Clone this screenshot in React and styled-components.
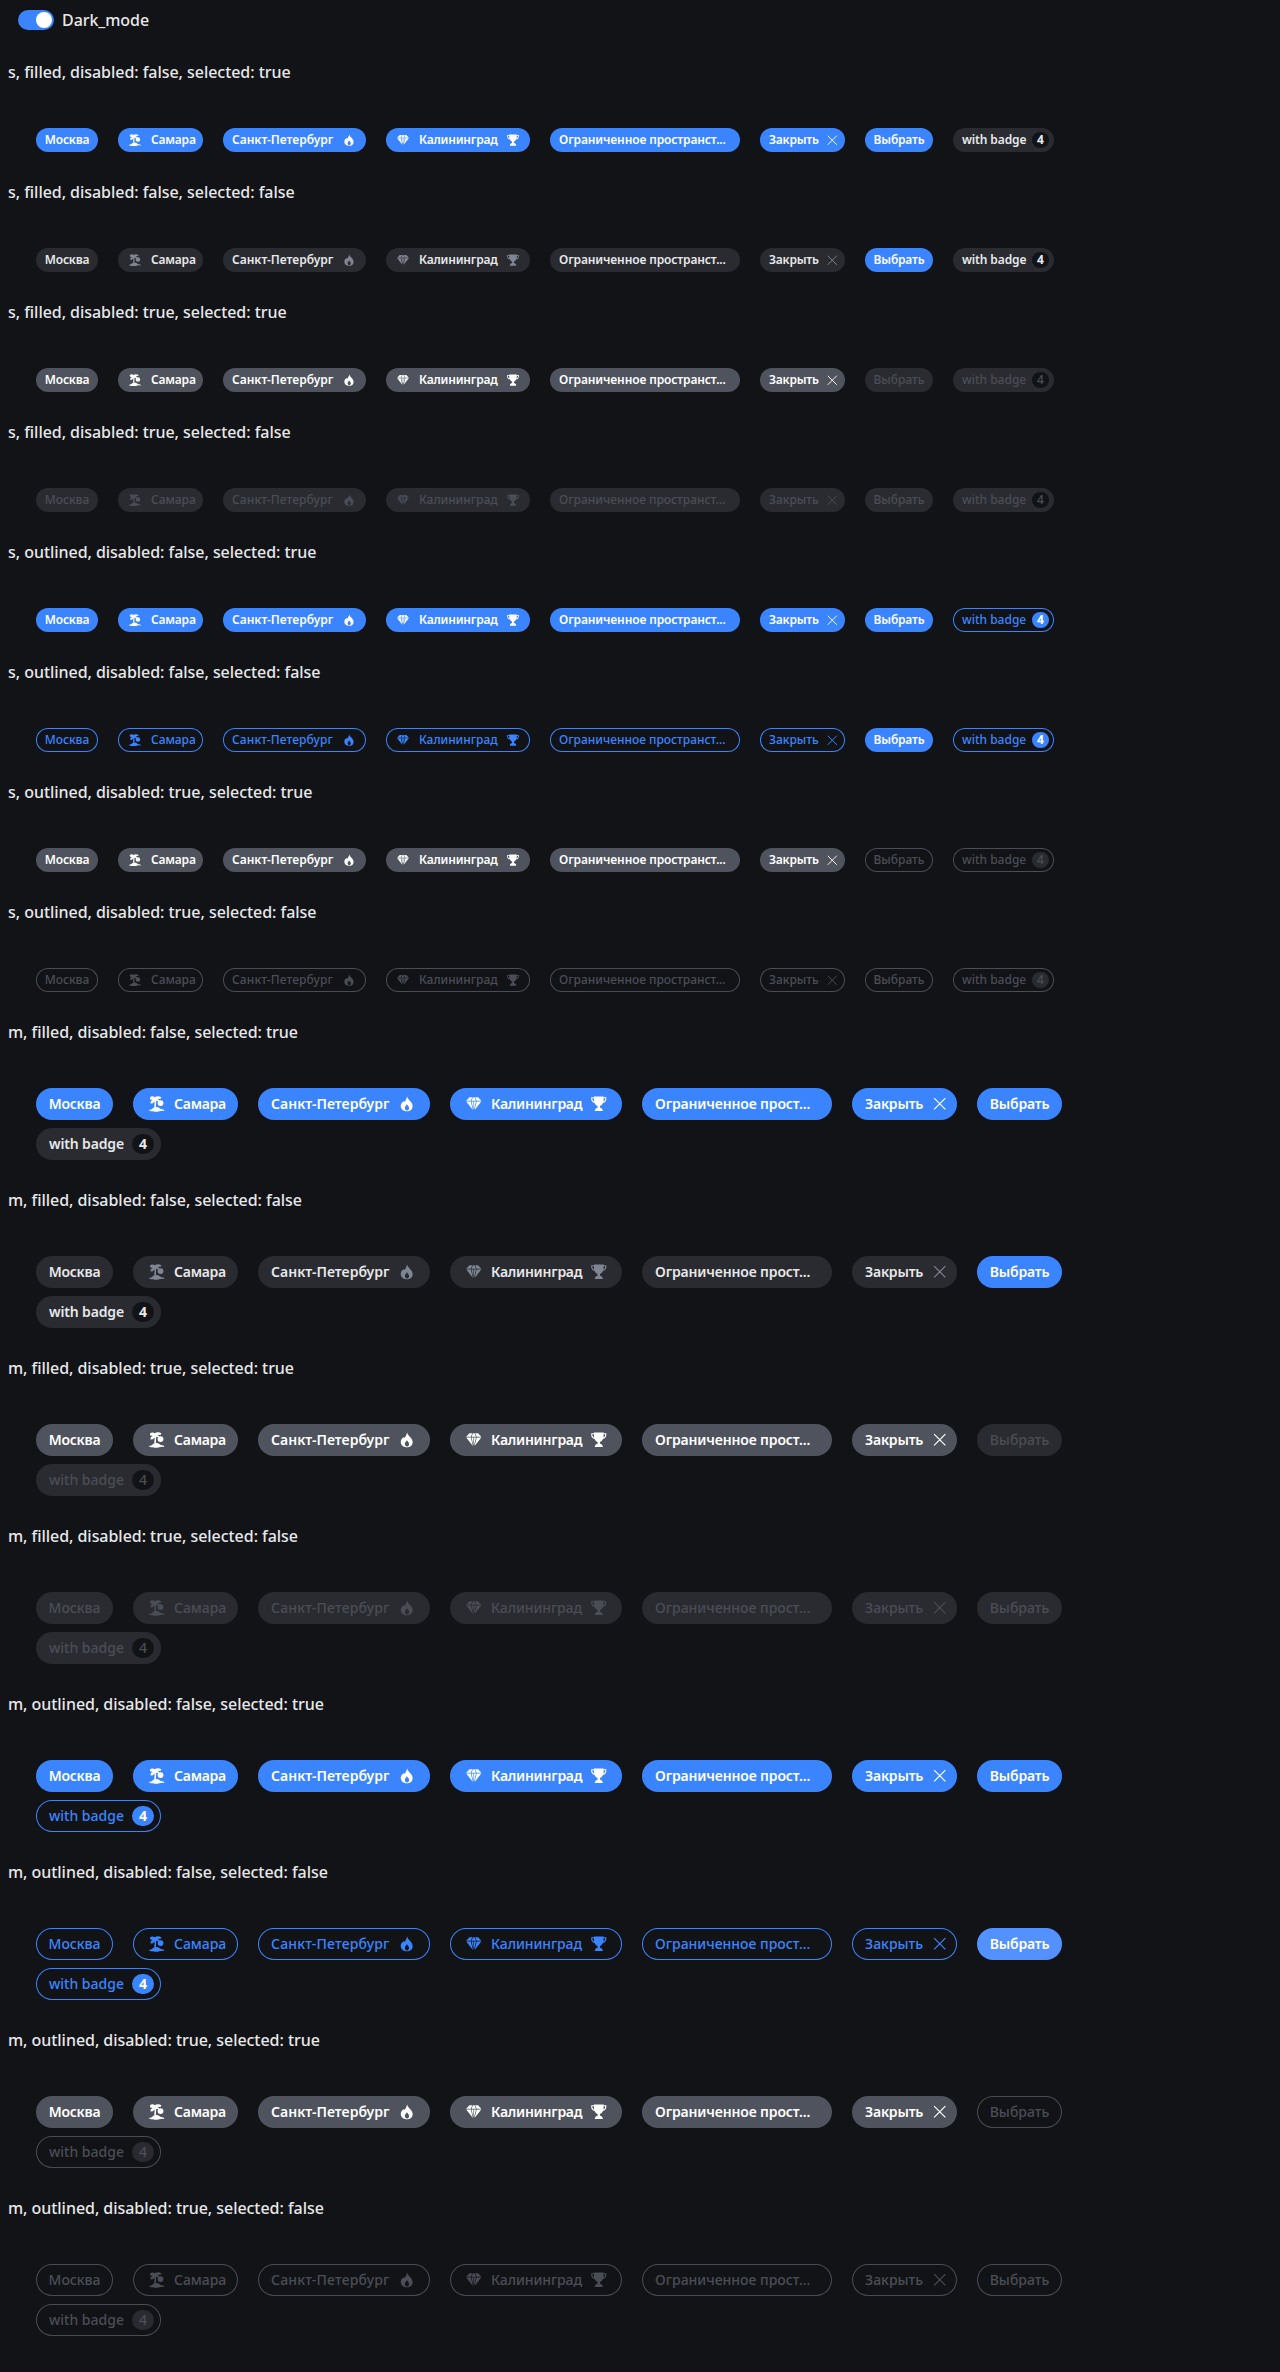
import React, { useState } from 'react';
import styled, { createGlobalStyle, css } from 'styled-components';

const color = {
  page: '#121317',
  text: '#e7e8ea',
  accent: '#3a85ff',
  accentHover: '#5291ff',
  surface: '#2a2b30',
  muted: '#4f535d',
  icon: '#7f8592',
  faint: '#4a4d56',
};

const GlobalStyle = createGlobalStyle`
  body {
    margin: 0;
    background: ${color.page};
    color: ${color.text};
    font-family: "Noto Sans", "Open Sans", sans-serif;
    font-weight: 500;
  }
`;

const Page = styled.main`
  box-sizing: border-box;
  min-height: 2372px;
  padding: 10px 8px 0;
`;

const ModeSwitch = styled.label`
  display: flex;
  align-items: center;
  gap: 8px;
  height: 20px;
  margin-bottom: 30px;
  padding-left: 10px;
  font-size: 16px;
  line-height: 20px;
  letter-spacing: -0.05px;
  cursor: pointer;
`;

const Track = styled.span`
  box-sizing: border-box;
  display: flex;
  justify-content: ${(p) => (p.$on ? 'flex-end' : 'flex-start')};
  width: 36px;
  height: 20px;
  padding: 2px;
  border-radius: 10px;
  background: ${(p) => (p.$on ? color.accent : color.muted)};
`;

const Knob = styled.span`
  width: 16px;
  height: 16px;
  border-radius: 50%;
  background: #fff;
`;

const HiddenInput = styled.input`
  position: absolute;
  opacity: 0;
  width: 0;
  height: 0;
  margin: 0;
`;

const Section = styled.section`
  display: flex;
  flex-direction: column;
  gap: 44px;
  padding-bottom: 28px;
`;

const Title = styled.h2`
  margin: 0;
  font-size: 16px;
  font-weight: 500;
  line-height: 24px;
  letter-spacing: -0.045px;
`;

const ChipRow = styled.div`
  display: flex;
  flex-wrap: wrap;
  gap: 8px 20px;
  width: 1100px;
  padding-left: 28px;
`;

const filledIdle = css`
  background: ${color.surface};
  color: ${color.text};
`;
const outlinedIdle = css`
  box-shadow: inset 0 0 0 1px ${color.accent};
  color: ${color.accent};
`;
const active = css`
  background: ${(p) => (p.$hovered ? color.accentHover : color.accent)};
  color: #fff;
`;
const activeDisabled = css`
  background: ${color.muted};
  color: #fff;
`;
const filledDisabled = css`
  background: ${color.surface};
  color: ${color.faint};
`;
const outlinedDisabled = css`
  box-shadow: inset 0 0 0 1px ${color.faint};
  color: ${color.faint};
`;

const tones = {
  active,
  activeDisabled,
  filledIdle,
  outlinedIdle,
  filledDisabled,
  outlinedDisabled,
};

const Chip = styled.button`
  box-sizing: border-box;
  display: flex;
  align-items: center;
  justify-content: ${(p) => (p.$center ? 'center' : 'flex-start')};
  width: ${(p) => p.$width}px;
  height: ${(p) => (p.$size === 's' ? 24 : 32)}px;
  padding: 0 ${(p) => p.$end}px 0 ${(p) => p.$start}px;
  border: 0;
  border-radius: 16px;
  background: transparent;
  font-family: inherit;
  font-weight: ${(p) => (p.$strong ? 600 : 500)};
  font-size: ${(p) => (p.$size === 's' ? 12 : 14)}px;
  line-height: ${(p) => (p.$size === 's' ? 16 : 20)}px;
  white-space: nowrap;
  ${(p) => tones[p.$tone]}
`;

const Label = styled.span`
  letter-spacing: ${(p) => p.$tracking}px;
`;

const Slot = styled.span`
  flex: none;
  display: flex;
  align-items: center;
  justify-content: center;
  width: ${(p) => (p.$size === 's' ? 16 : 24)}px;
  color: ${(p) => (p.$dim ? color.icon : 'inherit')};
  ${(p) => p.$side === 'left' && `margin-right: ${p.$size === 's' ? 8 : 5}px;`}
  ${(p) => p.$side === 'right' && 'margin-left: auto;'}
`;

const Glyph = styled.svg`
  display: block;
  width: ${(p) => p.$px}px;
  height: ${(p) => p.$px}px;
`;

const badgeBack = {
  filledIdle: color.page,
  filledDisabled: color.page,
  outlinedIdle: color.accent,
  outlinedDisabled: color.surface,
};

const Badge = styled.span`
  flex: none;
  display: flex;
  align-items: center;
  justify-content: center;
  width: ${(p) => (p.$size === 's' ? 17 : 22)}px;
  height: ${(p) => (p.$size === 's' ? 16 : 20)}px;
  margin-left: auto;
  border-radius: 11px;
  background: ${(p) => badgeBack[p.$tone]};
  color: ${(p) => (p.$tone === 'outlinedIdle' ? '#fff' : 'inherit')};
  font-weight: ${(p) => (p.$tone.endsWith('Idle') ? 700 : 500)};
`;

const PalmShape = () => (
  <g fill="currentColor">
    <path d="M1 1.300C2.600.1 4.700.1 6 1.200 7.800 0 10.600-.2 12.900 1.500l-.9 1.300-3.400.2 1.900 1.100.3 1.900-3.400-1-.3 6.600H5.400l.5-6-1.900 2-2.500.2.3-2.300 2-1.500-2.400-.5z" />
    <circle cx="11.900" cy="7.300" r="3" />
    <path d="M.2 14.200c1.700 0 2.600-.4 3.700-1.500 2-1.900 5.600-1.800 7.400.2 1.300 1 3 .4 4.600 1.600l-.5 1.100c-1.700-.8-2.900-.5-4.700.1-3.500 1-7.600.5-10.500-.4z" />
  </g>
);

const FlameShape = () => (
  <path
    fill="currentColor"
    fillRule="evenodd"
    d="M8.300.2c.4 2.400 2 3.600 3.600 5.400 1.300 1.500 2.200 3 2.200 4.900 0 3.200-2.500 5.300-6.100 5.300s-6.200-2.200-6.200-5.400c0-2.500 1.300-4 2.700-5.100l.8 1C6.900 5 8 2.600 8.300.2zM8.300 8.600C7.500 9.700 6.100 10.800 6.100 12.400c0 1.500.9 2.500 2.200 2.500s2.100-1 2.100-2.500c0-1.600-1.400-2.500-2.100-3.800z"
  />
);

const GemShape = () => (
  <g fill="currentColor">
    <path d="M3.600 1.200h3L4.900 5H.1z" />
    <path d="M7.200 1.200h1.600L10.300 5H5.700z" />
    <path d="M9.400 1.200h3L15.900 5h-4.800z" />
    <path d="M.2 5.600h4.800L7.100 14.400z" />
    <path d="M5.700 5.600h2v8.600z" />
    <path d="M8.300 5.600h2L8.300 14.200z" />
    <path d="M11 5.600h4.800L8.900 14.400z" />
  </g>
);

const TrophyShape = () => (
  <path
    fill="currentColor"
    fillRule="evenodd"
    d="M3 .6h10v.7h2.800v1.900c0 2.100-1.400 3.700-3.500 3.900-.7 1.600-1.700 2.600-3 3.100V12c1.500.4 2.700 1.200 2.900 2.700v.9H3.900v-.9c.2-1.500 1.400-2.300 2.900-2.700v-1.800c-1.300-.5-2.400-1.500-3.100-3.100C1.600 6.900.2 5.300.2 3.200V1.300H3zM1.400 2.400v.8c0 1.200.6 2.100 1.700 2.500C3 4.800 3 3.500 3 2.400zM14.600 2.400H13c0 1.100 0 2.400-.1 3.300 1.100-.4 1.700-1.300 1.700-2.500z"
  />
);

const CrossShape = () => (
  <path d="M2.200 2.200l11.600 11.600M13.800 2.200L2.200 13.800" stroke="currentColor" strokeWidth="1.200" fill="none" />
);

const shapes = {
  palm: PalmShape,
  flame: FlameShape,
  gem: GemShape,
  trophy: TrophyShape,
  cross: CrossShape,
};

const glyphSize = (name, size) => {
  if (name === 'cross') return size === 's' ? 12.5 : 15.5;
  return size === 's' ? 12 : 15.5;
};

function Icon({ name, size, side, dim }) {
  const Shape = shapes[name];
  return (
    <Slot $size={size} $side={side} $dim={dim}>
      <Glyph viewBox="0 0 16 16" $px={glyphSize(name, size)} aria-hidden="true">
        <Shape />
      </Glyph>
    </Slot>
  );
}

// tracking: [regular, strong]
const chips = {
  s: [
    { label: 'Москва', width: 62, center: true, tracking: [-0.05, -0.2] },
    { label: 'Самара', width: 85, left: 'palm', tracking: [-0.05, -0.2] },
    { label: 'Санкт-Петербург', width: 143, right: 'flame', tracking: [0.12, 0] },
    { label: 'Калининград', width: 144, left: 'gem', right: 'trophy', tracking: [-0.03, -0.2] },
    { label: 'Ограниченное пространст...', width: 190, tracking: [0, -0.12] },
    { label: 'Закрыть', width: 85, right: 'cross', end: 5, tracking: [0, -0.2] },
    { label: 'Выбрать', width: 68, center: true, pick: true, tracking: [0, -0.2] },
    { label: 'with badge', width: 101, badge: 4, end: 5, tracking: [0, -0.13] },
  ],
  m: [
    { label: 'Москва', width: 77, center: true, tracking: [-0.05, -0.25] },
    { label: 'Самара', width: 105, left: 'palm', tracking: [-0.05, -0.25] },
    { label: 'Санкт-Петербург', width: 172, right: 'flame', tracking: [0.18, 0.02] },
    { label: 'Калининград', width: 172, left: 'gem', right: 'trophy', tracking: [-0.1, -0.27] },
    { label: 'Ограниченное прост...', width: 190, tracking: [0, -0.15] },
    { label: 'Закрыть', width: 105, right: 'cross', end: 5, tracking: [0, -0.22] },
    { label: 'Выбрать', width: 85, center: true, pick: true, tracking: [0, -0.2] },
    { label: 'with badge', width: 125, badge: 4, end: 7, tracking: [0, -0.15] },
  ],
};

const bools = [false, true];
const sections = ['s', 'm'].flatMap((size) =>
  ['filled', 'outlined'].flatMap((view) =>
    bools.flatMap((disabled) =>
      [true, false].map((selected) => ({ size, view, disabled, selected }))
    )
  )
);

function toneOf(chip, { view, disabled, selected }) {
  const idle = view + (disabled ? 'Disabled' : 'Idle');
  if (chip.badge) return idle;
  if (chip.pick) return disabled ? idle : 'active';
  if (selected) return disabled ? 'activeDisabled' : 'active';
  return idle;
}

function ChipSection(props) {
  const { size, view, disabled, selected } = props;
  return (
    <Section>
      <Title>{`${size}, ${view}, disabled: ${disabled}, selected: ${selected}`}</Title>
      <ChipRow>
        {chips[size].map((chip) => {
          const tone = toneOf(chip, props);
          const dim = tone === 'filledIdle';
          const strong = dim || tone.startsWith('active');
          const hovered = chip.pick && size === 'm' && view === 'outlined' && !disabled && !selected;
          const start = size === 's' ? 9 : chip.left || chip.center ? 12 : 13;
          const end = chip.end ?? (size === 's' ? 9 : chip.center ? 12 : 11);
          return (
            <Chip
              key={chip.label}
              type="button"
              disabled={disabled}
              $size={size}
              $tone={tone}
              $strong={strong}
              $width={chip.width}
              $center={chip.center}
              $start={start}
              $end={end}
              $hovered={hovered}
            >
              {chip.left && <Icon name={chip.left} size={size} side="left" dim={dim} />}
              <Label $tracking={chip.tracking[strong ? 1 : 0]}>{chip.label}</Label>
              {chip.right && <Icon name={chip.right} size={size} side="right" dim={dim} />}
              {chip.badge && (
                <Badge $size={size} $tone={tone}>
                  {chip.badge}
                </Badge>
              )}
            </Chip>
          );
        })}
      </ChipRow>
    </Section>
  );
}

export default function App() {
  const [dark, setDark] = useState(true);
  return (
    <>
      <GlobalStyle />
      <Page>
        <ModeSwitch>
          <HiddenInput type="checkbox" checked={dark} onChange={() => setDark(!dark)} />
          <Track $on={dark}>
            <Knob />
          </Track>
          Dark_mode
        </ModeSwitch>
        {sections.map((s) => (
          <ChipSection key={`${s.size}-${s.view}-${s.disabled}-${s.selected}`} {...s} />
        ))}
      </Page>
    </>
  );
}
